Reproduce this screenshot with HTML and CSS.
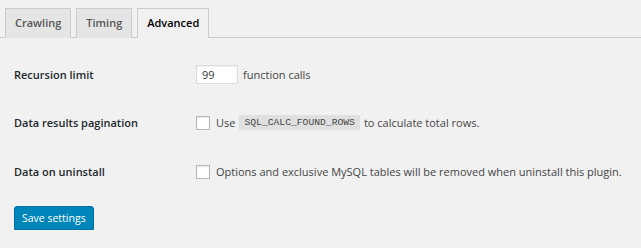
FILE: index.html
```html
<!DOCTYPE html>
<html lang="en">
<head>
    <meta charset="UTF-8">
    <title>Settings</title>
    <link rel="stylesheet" href="styles.css">
</head>
<body>
    <div class="nav-tab-wrapper">
        <a class="nav-tab">Crawling</a><a class="nav-tab">Timing</a><a class="nav-tab nav-tab-active">Advanced</a>
    </div>
    <form class="settings">
        <div class="form-table">
            <div class="row">
                <div class="th">Recursion limit</div>
                <div class="td"><input class="small-text" type="text" value="99"> function calls</div>
            </div>
            <div class="row">
                <div class="th">Data results pagination</div>
                <div class="td"><label><input type="checkbox"> Use <code>SQL_CALC_FOUND_ROWS</code> to calculate total rows.</label></div>
            </div>
            <div class="row">
                <div class="th">Data on uninstall</div>
                <div class="td"><label><input type="checkbox"> Options and exclusive MySQL tables will be removed when uninstall this plugin.</label></div>
            </div>
        </div>
        <p class="submit"><button type="button" class="button-primary">Save settings</button></p>
    </form>
</body>
</html>
```

FILE: styles.css
```css
*{
    margin: 0;
    padding: 0;
    box-sizing: border-box;
}
body{
    background: #f1f1f1;
    color: #444;
    font-family: "Open Sans", sans-serif;
    font-size: 11px;
}

.nav-tab-wrapper{
    display: flex;
    padding-top: 8px;
    border-bottom: 1px solid #ccc;
    height: 38px;
}
.nav-tab{
    display: block;
    height: 30px;
    margin-left: 5px;
    padding: 0 9px;
    line-height: 27px;
    font-size: 11px;
    font-weight: 600;
    color: #555;
    background: #e5e5e5;
    border: 1px solid #ccc;
    border-bottom: none;
}
.nav-tab-active{
    background: #f1f1f1;
    color: #000;
}

.settings{
    padding-top: 12px;
}
.form-table .row{
    display: grid;
    grid-template-columns: 182px 1fr;
    align-items: center;
    height: 48px;
    padding-left: 14px;
}
.form-table .row + .row{
    height: 49px;
}
.th{
    font-weight: 600;
    color: #23282d;
}
.td{
    display: flex;
    align-items: center;
}
.td label{
    display: flex;
    align-items: center;
}
.small-text{
    width: 42px;
    height: 19px;
    margin-right: 5px;
    padding: 0 5px;
    font-family: inherit;
    font-size: 11px;
    color: #32373c;
    background: #fff;
    border: 1px solid #ddd;
    box-shadow: inset 0 1px 2px rgba(0,0,0,.07);
    outline: none;
}
input[type=checkbox]{
    appearance: none;
    width: 14px;
    height: 14px;
    margin-right: 6px;
    background: #fff;
    border: 1px solid #b4b9be;
    box-shadow: inset 0 1px 2px rgba(0,0,0,.1);
}
code{
    margin: 0 4px;
    padding: 2px 5px;
    font-family: "Liberation Mono", monospace;
    font-size: 9.7px;
    background: rgba(0,0,0,.07);
}

.submit{
    padding: 10px 0 0 14px;
}
.button-primary{
    height: 24px;
    padding: 0 7px;
    font-family: inherit;
    font-size: 10.5px;
    color: #fff;
    background: #0085ba;
    border: 1px solid #0073aa;
    border-radius: 3px;
    box-shadow: 0 1px 0 #006799;
}
```
